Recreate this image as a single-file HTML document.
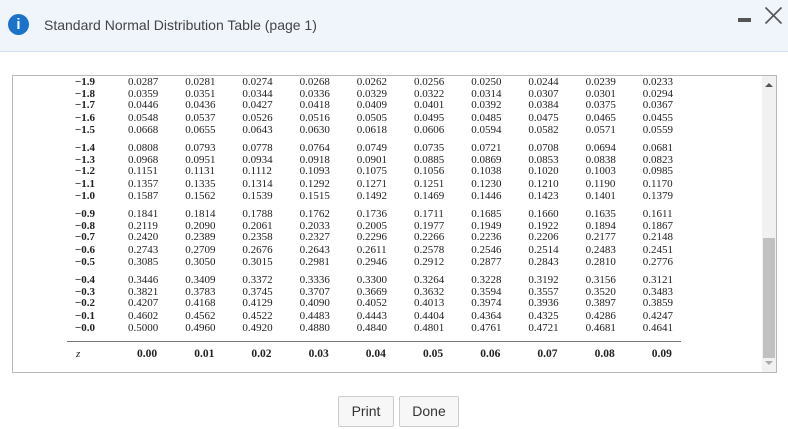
<html><head><style>
body{margin:0;width:788px;height:429px;background:#fff;position:relative;overflow:hidden;font-family:"Liberation Sans",sans-serif}
.hdr{position:absolute;left:0;top:0;width:788px;height:51px;background:#f0f5fc;border-bottom:1px solid #cfe0f3}
.box{position:absolute;left:12px;top:75px;width:763px;height:296px;border:1px solid #b8b8b8;background:#fff}
.t{position:absolute;font-family:"Liberation Serif",serif;font-size:11px;line-height:12px;color:#222;white-space:nowrap}
.b{font-weight:bold}
.btn{position:absolute;top:396px;height:29px;border:1px solid #ccc;border-radius:2px;background:#f7f7f7;font-size:14px;color:#333;line-height:29px;text-align:center}
</style></head><body>
<div class="hdr">
<div style="position:absolute;left:8px;top:14px;width:21px;height:21px;border-radius:50%;background:#1a73c8;color:#fff;font:bold 15px/21px 'Liberation Sans',sans-serif;text-align:center">i</div>
<div style="position:absolute;left:44px;top:15px;font-size:14px;color:#444;line-height:20px">Standard Normal Distribution Table (page 1)</div>
<div style="position:absolute;left:738px;top:18px;width:13px;height:4px;background:#555"></div>
<svg style="position:absolute;left:764px;top:6px" width="19" height="19"><path d="M1.5 1.5L17.5 17.5M17.5 1.5L1.5 17.5" stroke="#555" stroke-width="1.6"/></svg>
</div>
<div class="box">
<div style="position:absolute;right:0;top:0;width:14px;height:296px;background:#f1f1f1"></div>
<div style="position:absolute;right:1px;top:162px;width:12px;height:120px;background:#c1c1c1"></div>
<div style="position:absolute;right:3px;top:7px;border:4px solid transparent;border-bottom:4px solid #555;border-top:0"></div>
<div style="position:absolute;right:3px;top:285px;border:4px solid transparent;border-top:4px solid #aaa;border-bottom:0"></div>
<div style="position:absolute;left:54px;top:265px;width:614px;height:1px;background:#777"></div>
</div>
<div id="tb"></div>
<script>
var rows=[["−1.9","0.0287 0.0281 0.0274 0.0268 0.0262 0.0256 0.0250 0.0244 0.0239 0.0233"],
["−1.8","0.0359 0.0351 0.0344 0.0336 0.0329 0.0322 0.0314 0.0307 0.0301 0.0294"],
["−1.7","0.0446 0.0436 0.0427 0.0418 0.0409 0.0401 0.0392 0.0384 0.0375 0.0367"],
["−1.6","0.0548 0.0537 0.0526 0.0516 0.0505 0.0495 0.0485 0.0475 0.0465 0.0455"],
["−1.5","0.0668 0.0655 0.0643 0.0630 0.0618 0.0606 0.0594 0.0582 0.0571 0.0559"],
["−1.4","0.0808 0.0793 0.0778 0.0764 0.0749 0.0735 0.0721 0.0708 0.0694 0.0681"],
["−1.3","0.0968 0.0951 0.0934 0.0918 0.0901 0.0885 0.0869 0.0853 0.0838 0.0823"],
["−1.2","0.1151 0.1131 0.1112 0.1093 0.1075 0.1056 0.1038 0.1020 0.1003 0.0985"],
["−1.1","0.1357 0.1335 0.1314 0.1292 0.1271 0.1251 0.1230 0.1210 0.1190 0.1170"],
["−1.0","0.1587 0.1562 0.1539 0.1515 0.1492 0.1469 0.1446 0.1423 0.1401 0.1379"],
["−0.9","0.1841 0.1814 0.1788 0.1762 0.1736 0.1711 0.1685 0.1660 0.1635 0.1611"],
["−0.8","0.2119 0.2090 0.2061 0.2033 0.2005 0.1977 0.1949 0.1922 0.1894 0.1867"],
["−0.7","0.2420 0.2389 0.2358 0.2327 0.2296 0.2266 0.2236 0.2206 0.2177 0.2148"],
["−0.6","0.2743 0.2709 0.2676 0.2643 0.2611 0.2578 0.2546 0.2514 0.2483 0.2451"],
["−0.5","0.3085 0.3050 0.3015 0.2981 0.2946 0.2912 0.2877 0.2843 0.2810 0.2776"],
["−0.4","0.3446 0.3409 0.3372 0.3336 0.3300 0.3264 0.3228 0.3192 0.3156 0.3121"],
["−0.3","0.3821 0.3783 0.3745 0.3707 0.3669 0.3632 0.3594 0.3557 0.3520 0.3483"],
["−0.2","0.4207 0.4168 0.4129 0.4090 0.4052 0.4013 0.3974 0.3936 0.3897 0.3859"],
["−0.1","0.4602 0.4562 0.4522 0.4483 0.4443 0.4404 0.4364 0.4325 0.4286 0.4247"],
["−0.0","0.5000 0.4960 0.4920 0.4880 0.4840 0.4801 0.4761 0.4721 0.4681 0.4641"]];
var h="",off=[0,11.5,23,36,48];
for(var i=0;i<20;i++){var g=Math.floor(i/5),y=76+g*66+off[i%5];
h+='<div class="t b" style="left:75px;top:'+y+'px">'+rows[i][0]+'</div>';
var v=rows[i][1].split(" ");for(var j=0;j<10;j++)h+='<div class="t" style="left:'+(128+j*57.2)+'px;top:'+y+'px">'+v[j]+'</div>';}
h+='<div class="t" style="left:76px;top:348px;font-style:italic">z</div>';
for(var j=0;j<10;j++)h+='<div class="t b" style="left:'+(137+j*57.2)+'px;top:348px;font-size:11.5px">0.0'+j+'</div>';
document.getElementById("tb").innerHTML=h;
</script>
<div class="btn" style="left:338px;width:54px">Print</div>
<div class="btn" style="left:399px;width:58px">Done</div>
</body></html>
